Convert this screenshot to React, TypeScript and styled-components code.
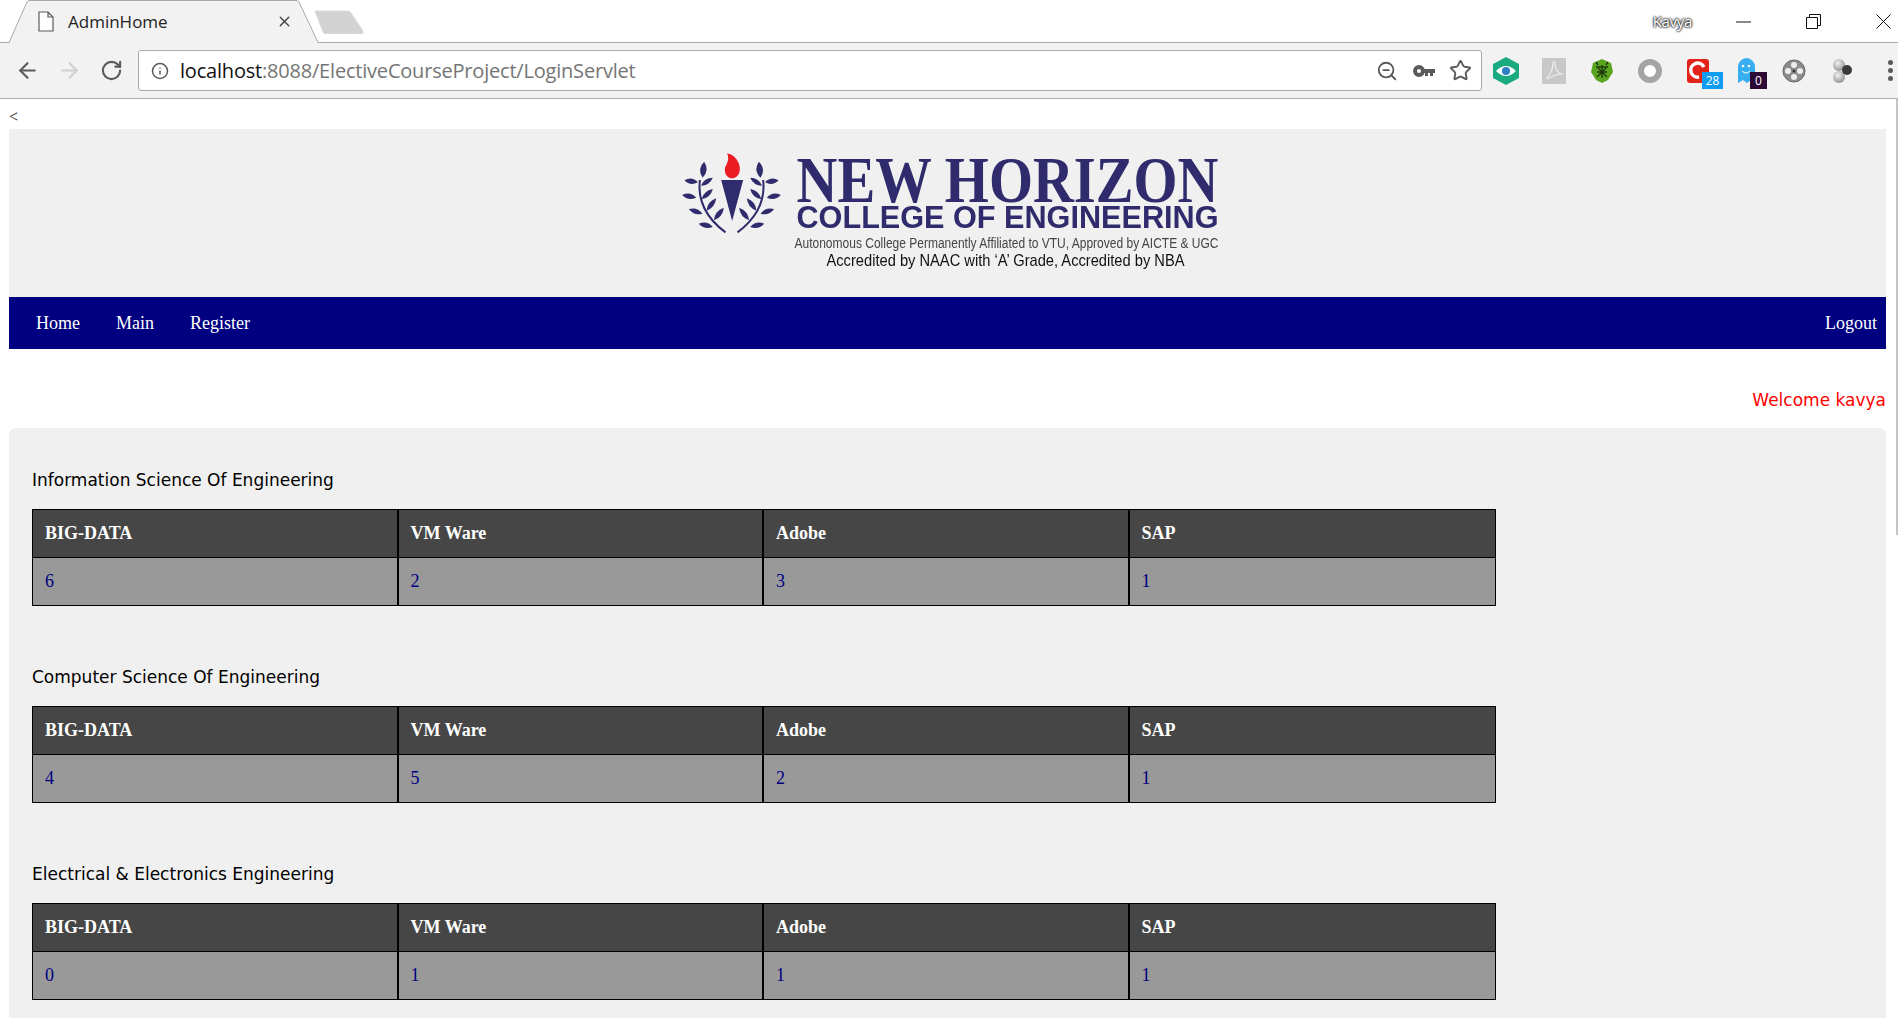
import React from 'react';
import styled, { createGlobalStyle } from 'styled-components';
import { ArrowLeft, ArrowRight, RotateCw, Info, Star, ZoomOut, X } from 'lucide-react';

const GlobalStyle = createGlobalStyle`
  html, body {
    margin: 0;
    padding: 0;
    height: 100%;
    overflow: hidden;
    background: #fff;
  }
  #root {
    height: 100%;
  }
`;

const Screen = styled.div`
  position: relative;
  height: 1018px;
  overflow: hidden;
  background: #fff;
`;

/* browser chrome */
const TitleBar = styled.div`
  display: flex;
  align-items: flex-start;
  height: 42px;
  border-bottom: 1px solid #a9a9a9;
  font-family: 'Open Sans', sans-serif;
`;
const Tab = styled.div`
  position: relative;
  display: flex;
  align-items: center;
  width: 309px;
  height: 43px;
  margin-left: 9px;
  padding-left: 29px;
  box-sizing: border-box;
  flex-shrink: 0;
`;
const TabShape = styled.svg`
  position: absolute;
  left: 0;
  top: 0;
`;
const TabDoc = styled.svg`
  position: relative;
  flex-shrink: 0;
`;
const TabTitle = styled.span`
  position: relative;
  margin-left: 14px;
  font-size: 17px;
  color: #222;
`;
const TabClose = styled.span`
  position: absolute;
  left: 267px;
  top: 13px;
  display: flex;
  color: #444;
`;
const NewTab = styled.svg`
  margin: 10px 0 0 -4px;
`;
const WindowControls = styled.div`
  display: flex;
  align-items: center;
  height: 42px;
  margin-left: auto;
`;
const UserName = styled.span`
  margin-right: 16px;
  font-size: 15px;
  letter-spacing: -0.3px;
  color: #fff;
  text-shadow: 0 0 2px #222, 0 0 2px #222, 0 0 3px #222;
`;
const WindowButton = styled.div<{ $w: number }>`
  display: flex;
  align-items: center;
  justify-content: ${(p) => (p.$w === 50 ? 'flex-end' : 'center')};
  width: ${(p) => p.$w}px;
  padding-right: ${(p) => (p.$w === 50 ? 7 : 0)}px;
  box-sizing: border-box;
`;

const Toolbar = styled.div`
  display: flex;
  align-items: center;
  height: 55px;
  padding-left: 6px;
  background: #f2f2f2;
  border-bottom: 1px solid #b0b0b0;
  font-family: 'Open Sans', sans-serif;
`;
const NavButton = styled.div<{ $off?: boolean }>`
  display: flex;
  align-items: center;
  justify-content: center;
  width: 42px;
  color: ${(p) => (p.$off ? '#cfcfcf' : '#5a5a5a')};
`;
const Omnibox = styled.div`
  display: flex;
  align-items: center;
  width: 1344px;
  height: 41px;
  margin-left: 6px;
  padding: 0 2px 0 12px;
  box-sizing: border-box;
  background: #fff;
  border: 1px solid #a9a9a9;
  border-radius: 3px;
  color: #5a5a5a;
`;
const Url = styled.div`
  margin-left: 11px;
  font-size: 20px;
  letter-spacing: -0.2px;
  color: #757575;
  white-space: nowrap;
`;
const UrlHost = styled.span`
  color: #111;
`;
const BoxIcons = styled.div`
  display: flex;
  margin-left: auto;
`;
const BoxIcon = styled.div`
  display: flex;
  align-items: center;
  justify-content: center;
  width: 37px;
`;
const Extension = styled.div`
  position: relative;
  display: flex;
  align-items: center;
  justify-content: center;
  width: 48px;
  height: 30px;
`;
const Badge = styled.span<{ $bg: string; $w: number }>`
  position: absolute;
  left: ${(p) => (p.$w > 18 ? 28 : 28)}px;
  top: 16px;
  width: ${(p) => p.$w}px;
  height: 17px;
  background: ${(p) => p.$bg};
  color: #fff;
  font-size: 12px;
  line-height: 18px;
  text-align: center;
`;
const MenuDots = styled.div`
  display: flex;
  flex-direction: column;
  align-items: flex-end;
  gap: 3px;
  width: 29px;
  padding-right: 2px;
  box-sizing: border-box;
`;
const Dot = styled.i`
  width: 5px;
  height: 5px;
  border-radius: 50%;
  background: #5a5a5a;
`;
const ScrollThumb = styled.div`
  position: absolute;
  right: 0;
  top: 99px;
  width: 2px;
  height: 436px;
  background: #c4c4c4;
`;

/* page */
const Page = styled.div`
  padding: 0 12px 0 9px;
  font-family: 'Liberation Serif', serif;
`;
const BackMark = styled.div`
  height: 30px;
  line-height: 36px;
  font-size: 16px;
  color: #222;
`;
const Banner = styled.div`
  display: flex;
  justify-content: center;
  align-items: center;
  height: 168px;
  background: #f0f0f0;
`;
const Logo = styled.svg`
  filter: blur(0.35px);
`;
const MenuBar = styled.nav`
  display: flex;
  align-items: center;
  height: 52px;
  background: #000080;
  padding-left: 9px;
`;
const MenuLink = styled.a<{ $right?: boolean }>`
  padding: 0 ${(p) => (p.$right ? 9 : 18)}px 0 18px;
  margin-left: ${(p) => (p.$right ? 'auto' : 0)};
  font-size: 18px;
  color: #fff;
`;
const Welcome = styled.div`
  height: 79px;
  padding-top: 39px;
  box-sizing: border-box;
  line-height: 24px;
  text-align: right;
  font-family: 'DejaVu Sans', sans-serif;
  font-size: 17px;
  color: #f00;
`;
const Panel = styled.div`
  height: 600px;
  padding: 38px 0 0 23px;
  box-sizing: border-box;
  background: #f0f0f0;
  border-radius: 6px 6px 0 0;
`;
const Department = styled.section`
  height: 197px;
`;
const DepartmentName = styled.h3`
  margin: 0 0 14px;
  line-height: 29px;
  font-family: 'DejaVu Sans', sans-serif;
  font-size: 17px;
  font-weight: 400;
  color: #000;
`;
const CountTable = styled.table`
  width: 1464px;
  table-layout: fixed;
  border-collapse: separate;
  border-spacing: 0;
  border: 1px solid #000;
`;
const HeadCell = styled.th`
  height: 47px;
  padding: 0 0 0 12px;
  text-align: left;
  font-size: 18px;
  font-weight: 700;
  color: #fff;
  background: #464646;
  border-bottom: 1px solid #000;
  border-right: 2px solid #000;
  &:last-child {
    border-right: 0;
  }
`;
const CountCell = styled.td`
  height: 47px;
  padding: 0 0 0 12px;
  font-size: 18px;
  background: #999;
  border-right: 2px solid #000;
  &:last-child {
    border-right: 0;
  }
`;
const CountLink = styled.a`
  color: #000080;
`;

const courses = ['BIG-DATA', 'VM Ware', 'Adobe', 'SAP'];
const departments = [
  { name: 'Information Science Of Engineering', counts: [6, 2, 3, 1] },
  { name: 'Computer Science Of Engineering', counts: [4, 5, 2, 1] },
  { name: 'Electrical & Electronics Engineering', counts: [0, 1, 1, 1] },
];

// lens shaped leaf between two points
const leaf = (x1: number, y1: number, x2: number, y2: number, w: number) => {
  const mx = (x1 + x2) / 2;
  const my = (y1 + y2) / 2;
  const dx = x2 - x1;
  const dy = y2 - y1;
  const len = Math.hypot(dx, dy);
  const nx = (-dy / len) * w;
  const ny = (dx / len) * w;
  return `M${x1} ${y1}Q${mx + nx} ${my + ny} ${x2} ${y2}Q${mx - nx} ${my - ny} ${x1} ${y1}Z`;
};

const leaves = [
  [71, 50, 66, 98, 20],
  [12, 106, 52, 112, 16],
  [61, 122, 97, 98, 14],
  [5, 150, 47, 158, 16],
  [63, 163, 97, 132, 15],
  [25, 192, 66, 206, 15],
  [78, 197, 107, 160, 15],
  [100, 226, 130, 188, 15],
  [55, 236, 97, 246, 15],
];

const Laurel = () => (
  <g>
    <path d="M135 262C85 225 50 175 58 105" fill="none" stroke="#2f2b6c" strokeWidth="6" />
    {leaves.map((l, i) => (
      <path key={i} d={leaf(l[0], l[1], l[2], l[3], l[4])} fill="#2f2b6c" />
    ))}
  </g>
);

const CollegeLogo = () => (
  <Logo width="546" height="136" viewBox="674.5 145 546 136">
    <g transform="translate(680 145) scale(0.3333)">
      <Laurel />
      <g transform="translate(306 0) scale(-1 1)">
        <Laurel />
      </g>
      <path d="M122 105H188L155 228Z" fill="#2f2b6c" />
      <path d="M140 25C165 30 180 55 178 75C176 92 165 100 155 100C143 100 133 90 133 75C133 60 150 50 140 25Z" fill="#ed1c24" />
    </g>
    <text x="796" y="202" textLength="422" lengthAdjust="spacingAndGlyphs" fontFamily="'Liberation Serif', serif" fontWeight="700" fontSize="66" fill="#2f2b6c">NEW HORIZON</text>
    <text x="796" y="228" textLength="422" lengthAdjust="spacingAndGlyphs" fontFamily="'Liberation Sans', sans-serif" fontWeight="700" fontSize="31" fill="#2f2b6c">COLLEGE OF ENGINEERING</text>
    <text x="794" y="248" textLength="424" lengthAdjust="spacingAndGlyphs" fontFamily="'Liberation Sans', sans-serif" fontSize="14" fill="#444">Autonomous College Permanently Affiliated to VTU, Approved by AICTE &amp; UGC</text>
    <text x="826" y="266" textLength="358" lengthAdjust="spacingAndGlyphs" fontFamily="'Liberation Sans', sans-serif" fontSize="17" fill="#111">Accredited by NAAC with ‘A’ Grade, Accredited by NBA</text>
  </Logo>
);

const BrowserChrome = () => (
  <>
    <TitleBar>
      <Tab>
        <TabShape width="309" height="43">
          <path d="M0 43L18 2Q19 .5 21 .5H287Q289 .5 290 2L309 43Z" fill="#f2f2f2" />
          <path d="M0 42.5L18 2Q19 .5 21 .5H287Q289 .5 290 2L309 42.5" fill="none" stroke="#a9a9a9" />
        </TabShape>
        <TabDoc width="16" height="21" viewBox="0 0 16 21">
          <path d="M1 1H10L15 6V20H1Z M10 1V6H15" fill="#fff" stroke="#5a5a5a" strokeWidth="1.2" />
        </TabDoc>
        <TabTitle>AdminHome</TabTitle>
        <TabClose>
          <X size={17} strokeWidth={2} />
        </TabClose>
      </Tab>
      <NewTab width="50" height="24" viewBox="0 0 50 24">
        <path d="M1 1H34Q36 1 37 3L49 21Q50 24 47 24H12Q10 24 9 22Z" fill="#d2d2d2" stroke="#dcdcdc" />
      </NewTab>
      <WindowControls>
        <UserName>Kavya</UserName>
        <WindowButton $w={70}>
          <svg width="15" height="15"><path d="M0 8H15" stroke="#111" strokeWidth="1" /></svg>
        </WindowButton>
        <WindowButton $w={70}>
          <svg width="15" height="15"><path d="M.5 3.5H11.5V14.5H.5Z M3.5 3V.5H14.5V11.5H12" fill="none" stroke="#111" /></svg>
        </WindowButton>
        <WindowButton $w={50}>
          <svg width="15" height="15"><path d="M.5 .5L14.5 14.5M14.5 .5L.5 14.5" stroke="#111" /></svg>
        </WindowButton>
      </WindowControls>
    </TitleBar>
    <Toolbar>
      <NavButton><ArrowLeft size={25} strokeWidth={2} /></NavButton>
      <NavButton $off><ArrowRight size={25} strokeWidth={2} /></NavButton>
      <NavButton><RotateCw size={23} strokeWidth={2.2} /></NavButton>
      <Omnibox>
        <Info size={18} strokeWidth={2} />
        <Url><UrlHost>localhost</UrlHost>:8088/ElectiveCourseProject/LoginServlet</Url>
        <BoxIcons>
          <BoxIcon><ZoomOut size={22} strokeWidth={2} /></BoxIcon>
          <BoxIcon>
            <svg width="22" height="14" viewBox="0 0 22 14">
              <circle cx="6" cy="7" r="4" fill="none" stroke="#5a5a5a" strokeWidth="4" />
              <path d="M10 5H22V9H20V12H17V9H15V12H12V9H10Z" fill="#5a5a5a" />
            </svg>
          </BoxIcon>
          <BoxIcon><Star size={23} strokeWidth={2} /></BoxIcon>
        </BoxIcons>
      </Omnibox>
      <Extension>
        <svg width="26" height="28" viewBox="0 0 26 28">
          <path d="M13 0L26 7V21L13 28L0 21V7Z" fill="#1aaa80" />
          <path d="M3 14Q13 4 23 14Q13 24 3 14Z" fill="#fff" />
          <circle cx="13" cy="14" r="4" fill="#2a80c0" />
        </svg>
      </Extension>
      <Extension>
        <svg width="24" height="26" viewBox="0 0 24 26">
          <rect width="24" height="26" fill="#c8c8c8" />
          <path d="M4 21C8 18 11 11 11 5C11 3 13 3 13 5C13 11 16 16 21 16C16 16 10 18 6 21" fill="none" stroke="#eee" strokeWidth="1.2" />
        </svg>
      </Extension>
      <Extension>
        <svg width="22" height="24" viewBox="0 0 22 24">
          <path d="M11 0L20 4L22 13L17 21L11 24L5 21L0 13L2 4Z" fill="#5aa51e" />
          <path d="M5 8H17M6 13H16M11 6V19M7 6L5 3M15 6L17 3M6 18L15 9M16 18L7 9" stroke="#1f3a0c" strokeWidth="1.4" />
        </svg>
      </Extension>
      <Extension>
        <svg width="24" height="24" viewBox="0 0 24 24">
          <circle cx="12" cy="12" r="9" fill="#fff" stroke="#a4a4a4" strokeWidth="6" />
        </svg>
      </Extension>
      <Extension>
        <svg width="22" height="24" viewBox="0 0 22 24">
          <rect width="22" height="24" rx="3" fill="#e2231a" />
          <path d="M17 8A7 7 0 1 0 12 18" fill="none" stroke="#fff" strokeWidth="3.5" />
        </svg>
        <Badge $bg="#109cf1" $w={21}>28</Badge>
      </Extension>
      <Extension>
        <svg width="19" height="27" viewBox="0 0 19 27">
          <path d="M1 10A8.5 9 0 0 1 18 10V26L14 23L10 26L6 23L1 26Z" fill="#36aef0" />
          <circle cx="6" cy="9" r="1.3" fill="#fff" />
          <circle cx="12" cy="9" r="1.3" fill="#fff" />
          <path d="M5 14Q9 18 13 14" fill="none" stroke="#fff" />
        </svg>
        <Badge $bg="#2c0a35" $w={17}>0</Badge>
      </Extension>
      <Extension>
        <svg width="25" height="26" viewBox="0 0 25 26">
          <circle cx="12" cy="13" r="11" fill="#8d8d8d" stroke="#666" />
          <circle cx="12" cy="7" r="3" fill="#eee" />
          <circle cx="12" cy="19" r="3" fill="#eee" />
          <circle cx="6" cy="13" r="3" fill="#eee" />
          <circle cx="18" cy="13" r="3" fill="#eee" />
          <circle cx="12" cy="13" r="1.5" fill="#333" />
        </svg>
      </Extension>
      <Extension>
        <svg width="22" height="26" viewBox="0 0 22 26">
          <defs>
            <radialGradient id="ball" cx="40%" cy="35%" r="70%">
              <stop offset="0" stopColor="#f2f2f2" />
              <stop offset="1" stopColor="#8e8e8e" />
            </radialGradient>
          </defs>
          <circle cx="8" cy="7" r="6" fill="url(#ball)" />
          <circle cx="8" cy="19" r="6" fill="url(#ball)" />
          <circle cx="16" cy="12" r="5" fill="#3a3a3a" />
        </svg>
      </Extension>
      <MenuDots>
        <Dot />
        <Dot />
        <Dot />
      </MenuDots>
    </Toolbar>
  </>
);

export default function App() {
  return (
    <Screen>
      <GlobalStyle />
      <BrowserChrome />
      <Page>
        <BackMark>&lt;</BackMark>
        <Banner>
          <CollegeLogo />
        </Banner>
        <MenuBar>
          <MenuLink>Home</MenuLink>
          <MenuLink>Main</MenuLink>
          <MenuLink>Register</MenuLink>
          <MenuLink $right>Logout</MenuLink>
        </MenuBar>
        <Welcome>Welcome kavya</Welcome>
        <Panel>
          {departments.map((d) => (
            <Department key={d.name}>
              <DepartmentName>{d.name}</DepartmentName>
              <CountTable>
                <thead>
                  <tr>
                    {courses.map((c) => (
                      <HeadCell key={c}>{c}</HeadCell>
                    ))}
                  </tr>
                </thead>
                <tbody>
                  <tr>
                    {d.counts.map((n, i) => (
                      <CountCell key={i}>
                        <CountLink>{n}</CountLink>
                      </CountCell>
                    ))}
                  </tr>
                </tbody>
              </CountTable>
            </Department>
          ))}
        </Panel>
      </Page>
      <ScrollThumb />
    </Screen>
  );
}
